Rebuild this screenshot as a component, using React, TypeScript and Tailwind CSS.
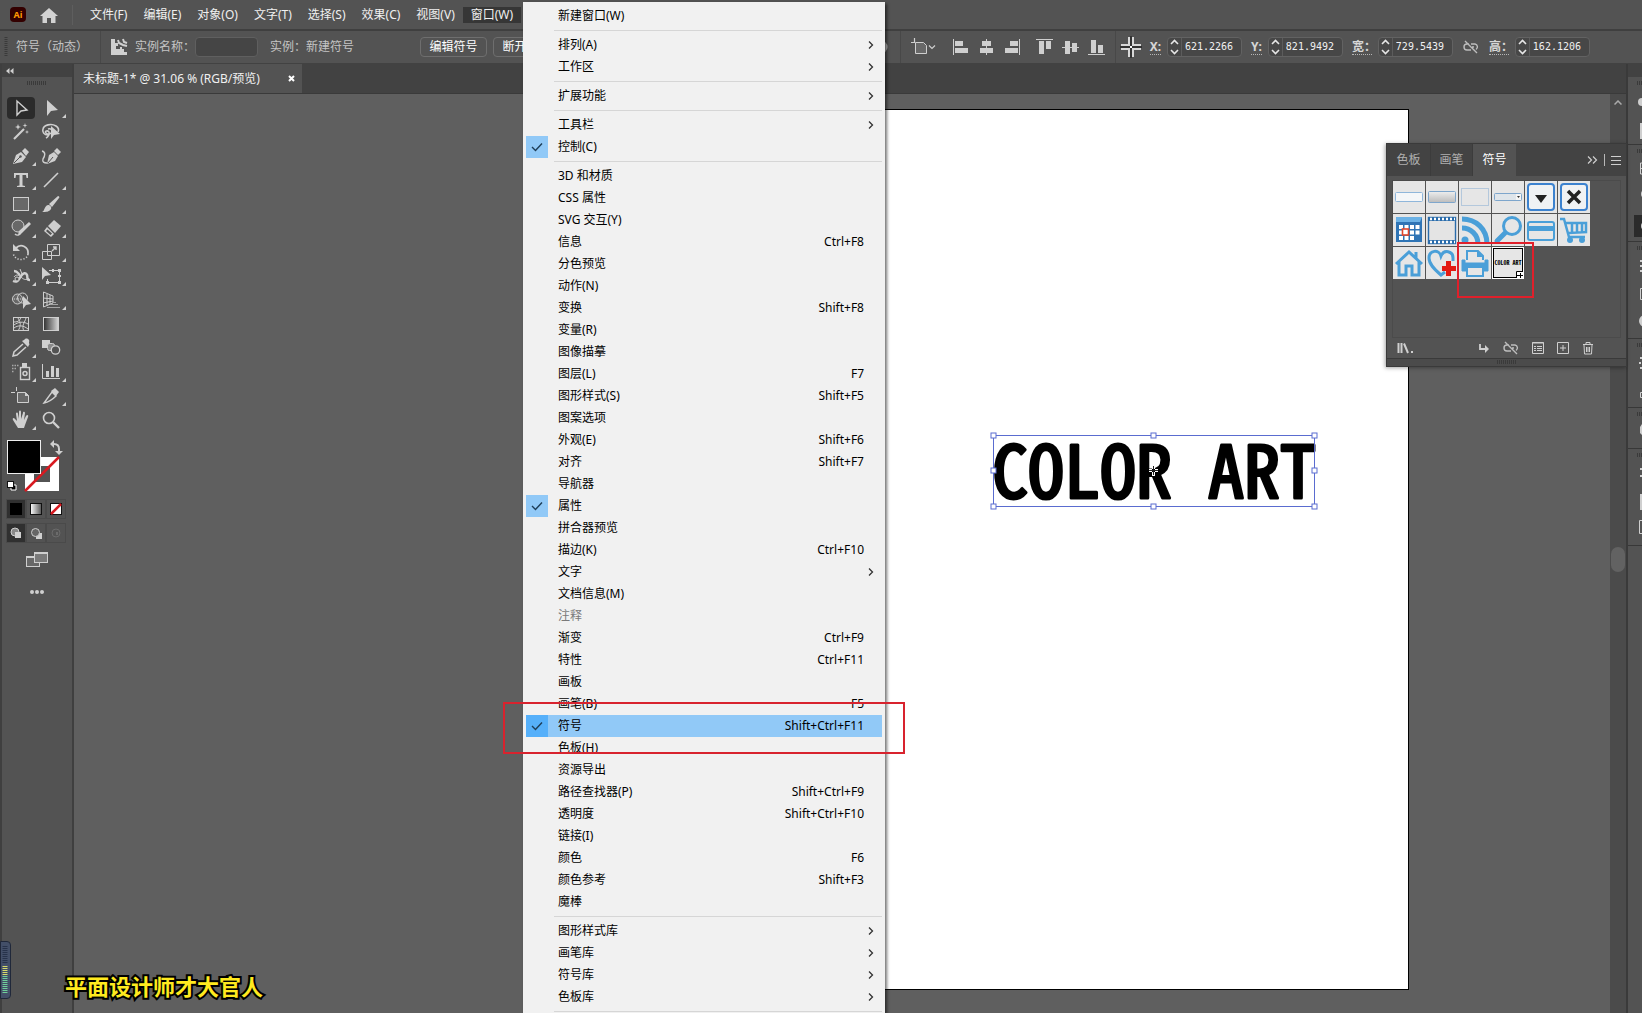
import type { ReactNode } from "react";
import { clsx } from "clsx";

type MenuEntry = {
  label: string;
  shortcut?: string;
  submenu?: boolean;
  checked?: boolean;
  active?: boolean;
  disabled?: boolean;
};

const menuBar = [
  "文件(F)",
  "编辑(E)",
  "对象(O)",
  "文字(T)",
  "选择(S)",
  "效果(C)",
  "视图(V)",
  "窗口(W)",
];

const windowMenu: MenuEntry[][] = [
  [{ label: "新建窗口(W)" }],
  [
    { label: "排列(A)", submenu: true },
    { label: "工作区", submenu: true },
  ],
  [{ label: "扩展功能", submenu: true }],
  [
    { label: "工具栏", submenu: true },
    { label: "控制(C)", checked: true },
  ],
  [
    { label: "3D 和材质" },
    { label: "CSS 属性" },
    { label: "SVG 交互(Y)" },
    { label: "信息", shortcut: "Ctrl+F8" },
    { label: "分色预览" },
    { label: "动作(N)" },
    { label: "变换", shortcut: "Shift+F8" },
    { label: "变量(R)" },
    { label: "图像描摹" },
    { label: "图层(L)", shortcut: "F7" },
    { label: "图形样式(S)", shortcut: "Shift+F5" },
    { label: "图案选项" },
    { label: "外观(E)", shortcut: "Shift+F6" },
    { label: "对齐", shortcut: "Shift+F7" },
    { label: "导航器" },
    { label: "属性", checked: true },
    { label: "拼合器预览" },
    { label: "描边(K)", shortcut: "Ctrl+F10" },
    { label: "文字", submenu: true },
    { label: "文档信息(M)" },
    { label: "注释", disabled: true },
    { label: "渐变", shortcut: "Ctrl+F9" },
    { label: "特性", shortcut: "Ctrl+F11" },
    { label: "画板" },
    { label: "画笔(B)", shortcut: "F5" },
    { label: "符号", shortcut: "Shift+Ctrl+F11", checked: true, active: true },
    { label: "色板(H)" },
    { label: "资源导出" },
    { label: "路径查找器(P)", shortcut: "Shift+Ctrl+F9" },
    { label: "透明度", shortcut: "Shift+Ctrl+F10" },
    { label: "链接(I)" },
    { label: "颜色", shortcut: "F6" },
    { label: "颜色参考", shortcut: "Shift+F3" },
    { label: "魔棒" },
  ],
  [
    { label: "图形样式库", submenu: true },
    { label: "画笔库", submenu: true },
    { label: "符号库", submenu: true },
    { label: "色板库", submenu: true },
  ],
  [],
];

function Svg({
  w = 20,
  h = 20,
  children,
}: {
  w?: number;
  h?: number;
  children: ReactNode;
}) {
  return (
    <svg
      width={w}
      height={h}
      viewBox={`0 0 ${w} ${h}`}
      fill="none"
      stroke="none"
      aria-hidden="true"
      className="block shrink-0"
    >
      {children}
    </svg>
  );
}

const C = "#cfcfcf";

// Toolbar tools, two per row. `more` draws the flyout corner.
const tools: { name: string; more?: boolean; icon: ReactNode }[] = [
  {
    name: "选择工具",
    icon: <path d="M6 3v14l4-4 6-1z" stroke={C} strokeWidth="1.4" />,
  },
  {
    name: "直接选择工具",
    more: true,
    icon: <path d="M6 2v16l4-5 7-1z" fill={C} />,
  },
  {
    name: "魔棒工具",
    icon: (
      <>
        <path d="M3 17 13 7" stroke={C} strokeWidth="2.2" />
        <path
          d="m7 2 .8 2.2L10 5l-2.200.8L7 8l-.8-2.200L4 5l2.200-.8zM14 1l.6 1.900 1.900.6-1.900.6L14 6l-.6-1.900-1.900-.6 1.900-.6zM16 8l.5 1.500L18 10l-1.500.5L16 12l-.5-1.500L14 10l1.500-.5z"
          fill={C}
        />
      </>
    ),
  },
  {
    name: "套索工具",
    icon: (
      <>
        <path
          d="M7 13c-4 0-6-3-5-6 1-4 8-6 13-3 3 2 3 4 2 6M7 7c3-1 5 1 4 3s-4 3-6 1 2-3 3-1-1 5-3 6"
          stroke={C}
          strokeWidth="1.6"
        />
        <path d="M10 4v13l3-4 6-1z" fill={C} />
      </>
    ),
  },
  {
    name: "钢笔工具",
    more: true,
    icon: (
      <>
        <path d="m2 18 3-9 5-3 5 5-4 5z" fill={C} />
        <path d="m11 5 3-3 4 4-3 4z" fill={C} />
        <path d="m3 17 6-6" stroke="#535353" />
        <circle cx="9.500" cy="10.500" r="1.200" fill="#535353" />
      </>
    ),
  },
  {
    name: "曲率工具",
    icon: (
      <>
        <path d="m6 18 2-9 5-3 4 4-3 5z" fill={C} />
        <path d="m13 5 3-3 4 4-3 3z" fill={C} />
        <path d="m7 17 5-6" stroke="#535353" />
        <path d="M1 5c4 1 3 5 1 8-1 3 1 4 4 4" stroke={C} strokeWidth="1.400" />
      </>
    ),
  },
  {
    name: "文字工具",
    more: true,
    icon: (
      <path
        d="M3 3h14v5h-1.500L15 5h-3.500v10.500L14 16v1H6v-1l2.500-.5V5H5l-.5 3H3z"
        fill={C}
      />
    ),
  },
  {
    name: "直线段工具",
    more: true,
    icon: <path d="M3 17 17 3" stroke={C} strokeWidth="1.600" />,
  },
  {
    name: "矩形工具",
    more: true,
    icon: (
      <rect x="2.500" y="3.500" width="15" height="13" fill="#686868" stroke={C} />
    ),
  },
  {
    name: "画笔工具",
    more: true,
    icon: (
      <>
        <path d="m8 10 9-8c1 0 2 1 1 2l-7 9z" fill={C} />
        <path d="M7 11c2 0 4 2 3 4-2 3-5 3-9 3 3-1 2-6 6-7z" fill={C} />
      </>
    ),
  },
  {
    name: "Shaper 工具",
    more: true,
    icon: (
      <>
        <circle cx="7" cy="8" r="6" fill="#686868" stroke={C} />
        <path d="m8 13 10-9 2 2-9 9-4 2z" fill={C} />
        <path d="M4 16c2 2 5 1 6-1" stroke={C} strokeWidth="1.400" />
      </>
    ),
  },
  {
    name: "橡皮擦工具",
    more: true,
    icon: (
      <>
        <path d="m7 8 6-6 7 6-6 7z" fill={C} />
        <path d="m6 9 7 7-3 3-7-6z" fill={C} />
        <path d="m6.500 11.500 4.500 4-1.500 1.500-4.500-4z" fill="#535353" />
      </>
    ),
  },
  {
    name: "旋转工具",
    more: true,
    icon: (
      <>
        <path d="M5 6c5-5 13-1 12 6" stroke={C} strokeWidth="1.800" />
        <path
          d="M17 12c-1 7-13 8-15-1"
          stroke={C}
          strokeWidth="1.600"
          strokeDasharray="1.200 1.800"
        />
        <path d="M2 2v7h7z" fill={C} />
      </>
    ),
  },
  {
    name: "比例缩放工具",
    more: true,
    icon: (
      <>
        <path d="M6.500 2.500h12v11h-12zM1.500 9.500h9v8h-9z" stroke={C} />
        <path d="m11 9 4-4M12 5h3v3" stroke={C} strokeWidth="1.400" />
      </>
    ),
  },
  {
    name: "宽度工具",
    more: true,
    icon: (
      <>
        <path
          d="M2 15c5 2 6-2 8-5s5-4 6-1-1 5 3 5M3 5c4 0 4 3 6 4"
          stroke={C}
          strokeWidth="2.400"
        />
        <path d="M3 11c2-3 5-2 7 0s5 4 8 1M9 3l2 5" stroke={C} />
        <circle cx="6" cy="13" r="2" fill="#535353" stroke={C} />
      </>
    ),
  },
  {
    name: "自由变换工具",
    more: true,
    icon: (
      <>
        <path d="M1 1v13l3-4 6-1z" fill={C} />
        <path d="M8 4.500h10.500v12h-12V13" stroke={C} />
        <path d="M17 3h3v3h-3zM5 15h3v3H5zM17 15h3v3h-3zM11 3h2v3h-2zM17 9h3v2h-3z" fill={C} />
      </>
    ),
  },
  {
    name: "形状生成器工具",
    more: true,
    icon: (
      <>
        <circle cx="6.500" cy="9" r="5" fill="#686868" stroke={C} />
        <circle cx="11.500" cy="8" r="5" stroke={C} />
        <path d="M3 9h10" stroke={C} strokeDasharray="1 1" />
        <path d="M12 6v13l3-4 5-1z" fill={C} />
      </>
    ),
  },
  {
    name: "透视网格工具",
    more: true,
    icon: (
      <>
        <path
          d="M2.500 2v15L12 13V6zM2 8l10 1M2 13l10-2M6 4v12M9 5v9"
          stroke={C}
        />
        <path d="M12 12.500h3M9 14.500h8M6 17.500h13" stroke="#a5a5a5" />
      </>
    ),
  },
  {
    name: "网格工具",
    icon: (
      <>
        <rect x="2.500" y="3.500" width="15" height="13" stroke={C} />
        <path
          d="M3 8c5 0 6-2 7-5M7 17c3-5 3-8 0-13M13 17c-3-5 1-9 2-13M3 14c4-3 9-3 14 1M3 11c4-3 9-4 14-1"
          stroke={C}
        />
      </>
    ),
  },
  {
    name: "渐变工具",
    icon: (
      <>
        <defs>
          <linearGradient id="tool-gradient">
            <stop stopColor="#303030" />
            <stop offset="1" stopColor="#d8d8d8" />
          </linearGradient>
        </defs>
        <rect
          x="2.500"
          y="3.500"
          width="15"
          height="13"
          fill="url(#tool-gradient)"
          stroke={C}
        />
      </>
    ),
  },
  {
    name: "吸管工具",
    more: true,
    icon: (
      <>
        <path d="m11 3 6 6 1-2c1-1 0-1 0-2s1-3-1-4-3 0-4 1z" fill={C} />
        <path d="m12 6-9 8-1 4 4-1 9-8" stroke={C} strokeWidth="1.500" />
      </>
    ),
  },
  {
    name: "混合工具",
    icon: (
      <>
        <path d="M1 2h8v8H1z" fill={C} />
        <rect x="6.500" y="5.500" width="7" height="7" rx="2" fill="#8a8a8a" stroke={C} />
        <circle cx="14.500" cy="12" r="4.200" fill="#535353" stroke={C} strokeWidth="1.300" />
      </>
    ),
  },
  {
    name: "符号喷枪工具",
    more: true,
    icon: (
      <>
        <path d="M11 1h5v4h-5z" fill={C} />
        <rect x="9.500" y="5.500" width="9" height="12" stroke={C} strokeWidth="1.400" />
        <circle cx="14" cy="11.500" r="2" stroke={C} strokeWidth="1.500" />
        <path d="M1 3.500h7M1 6.500h5M1 9.500h2" stroke="#a8a8a8" strokeWidth="1.500" strokeDasharray="1.500 1" />
      </>
    ),
  },
  {
    name: "柱形图工具",
    more: true,
    icon: (
      <>
        <path d="M1.500 2v14.500H19" stroke={C} />
        <path d="M5 9h3v6H5zM10 4h3v11h-3zM15 6h3v9h-3z" fill={C} />
      </>
    ),
  },
  {
    name: "画板工具",
    icon: (
      <>
        <path d="M6.500 6.500h8l3 3v7h-11z" fill="#686868" stroke={C} />
        <path d="M0 6.500h4M5.500 1v4" stroke={C} />
        <path d="M14 6v4h4z" fill={C} />
      </>
    ),
  },
  {
    name: "切片工具",
    more: true,
    icon: (
      <>
        <path d="M3 17 11 6l4 4c-3 3-7 6-12 7z" stroke={C} strokeWidth="1.400" />
        <path d="m10 5 4-3 4 4-3 4z" fill={C} />
      </>
    ),
  },
  {
    name: "抓手工具",
    more: true,
    icon: (
      <path
        d="M7 18 2 10c-1-2 1-3 2-1l2 2L5 4c0-2 2-2 2 0l1 5V2c0-2 2-2 2 0v7l2-6c0-2 2-1 2 0l-1 7 2-4c1-2 3-1 2 1l-3 8-1 3z"
        fill={C}
      />
    ),
  },
  {
    name: "缩放工具",
    icon: (
      <>
        <circle cx="8" cy="8" r="5.500" stroke={C} strokeWidth="1.600" />
        <path d="m12 12 6 6" stroke={C} strokeWidth="2.400" />
      </>
    ),
  },
];

function Toolbar() {
  return (
    <aside className="flex w-[74px] shrink-0 flex-col border-x-2 border-[#3f3f3f] bg-[#535353]">
      <div className="flex h-[13px] items-center bg-[#424242] pl-1">
        <Svg w={8} h={6}>
          <path d="M3.500 0v6L0 3zM7.500 0v6L4 3z" fill={C} />
        </Svg>
      </div>
      <div className="flex h-[19px] justify-center pt-1">
        <Grip />
      </div>
      <div className="grid grid-cols-[30px_30px] pl-1">
        {tools.map((tool, i) => (
          <button
            key={tool.name}
            type="button"
            aria-label={tool.name}
            className="relative flex h-6 items-center justify-center"
          >
            <span
              className={clsx(
                "flex h-[22px] w-7 items-center justify-center rounded-sm",
                i === 0 && "bg-[#2b2b2b]",
              )}
            >
              <Svg>{tool.icon}</Svg>
            </span>
            {tool.more && (
              <span className="absolute right-0 bottom-[2px]">
                <Svg w={4} h={4}>
                  <path d="M4 0v4H0z" fill={C} />
                </Svg>
              </span>
            )}
          </button>
        ))}
      </div>
      <div className="pt-[6px] pl-1">
        <svg width="60" height="60" viewBox="0 0 60 60" className="block">
          <path
            d="M19 19h34v34H19zM28 28v16h16V28z"
            fill="#fff"
            fillRule="evenodd"
          />
          <path d="M19 53 53 19" stroke="#d81920" strokeWidth="2.500" />
          <rect x="1.500" y="2.500" width="33" height="33" fill="#000" stroke="#eee" />
          <path d="M45 6h3q5 0 5 5v3" fill="none" stroke={C} strokeWidth="2" />
          <path d="m44 6 4-4v8zM49 13h8l-4 4z" fill={C} />
          <path d="M5 47h5v5H5z" fill="#000" stroke="#fff" />
          <rect x="1.500" y="43.500" width="6" height="6" fill="#fff" stroke="#111" />
        </svg>
        <div className="mt-px flex">
          <SwatchButton label="颜色" on>
            <path d="M1 1h12v12H1z" fill="#000" />
          </SwatchButton>
          <SwatchButton label="渐变">
            <defs>
              <linearGradient id="swatch-gradient">
                <stop stopColor="#fff" />
                <stop offset="1" stopColor="#555" />
              </linearGradient>
            </defs>
            <rect x="1.500" y="1.500" width="11" height="11" fill="url(#swatch-gradient)" stroke="#111" />
          </SwatchButton>
          <SwatchButton label="无">
            <rect x="1.500" y="1.500" width="11" height="11" fill="#fff" stroke="#111" />
            <path d="M2 12 12 2" stroke="#d81920" strokeWidth="2.500" />
          </SwatchButton>
        </div>
        <div className="mt-1 flex">
          <SwatchButton label="正常绘图" on>
            <circle cx="6" cy="6" r="4" fill="#888" stroke={C} />
            <path d="M6 6h6v6H6z" fill={C} />
          </SwatchButton>
          <SwatchButton label="背面绘图">
            <path d="M7 7h6v6H7z" fill={C} />
            <circle cx="6.500" cy="6.500" r="4" fill="#666" stroke={C} />
          </SwatchButton>
          <SwatchButton label="内部绘图">
            <circle cx="7" cy="7" r="4" stroke="#6b6b6b" />
            <path d="M7 6h2v3H7z" fill="#6b6b6b" />
          </SwatchButton>
        </div>
      </div>
      <button type="button" aria-label="更改屏幕模式" className="mt-2 self-center">
        <Svg w={22} h={18}>
          <rect x=".5" y="5.500" width="13" height="10" fill="#686868" stroke={C} />
          <path d="M0 5h8v2H0z" fill={C} />
          <rect x="8.500" y="1.500" width="13" height="10" fill="#7a7a7a" stroke={C} />
          <path d="M8 1h14v2H8z" fill={C} />
        </Svg>
      </button>
      <button type="button" aria-label="编辑工具栏" className="mt-5 self-center">
        <Svg w={14} h={6}>
          <path
            d="M2 3h.01M7 3h.01M12 3h.01"
            stroke={C}
            strokeWidth="4"
            strokeLinecap="round"
          />
        </Svg>
      </button>
    </aside>
  );
}

function SwatchButton({
  label,
  on,
  children,
}: {
  label: string;
  on?: boolean;
  children: ReactNode;
}) {
  return (
    <button
      type="button"
      aria-label={label}
      className={clsx(
        "flex h-5 w-5 items-center justify-center border border-[#4a4a4a]",
        on && "bg-[#303030]",
      )}
    >
      <Svg w={14} h={14}>
        {children}
      </Svg>
    </button>
  );
}

function Grip() {
  return (
    <Svg w={20} h={5}>
      <path d="M0 2h20" stroke="#3a3a3a" strokeWidth="4" strokeDasharray="1 1" />
    </Svg>
  );
}

function NumberField({
  id,
  label,
  value,
  wide,
}: {
  id: string;
  label: string;
  value: string;
  wide?: boolean;
}) {
  return (
    <div className="flex items-center gap-[6px]">
      <label
        htmlFor={id}
        className={clsx(
          "border-b border-dotted border-[#b5b5b5] text-xs leading-[14px] font-bold whitespace-nowrap text-[#d6d6d6]",
          wide && "w-5",
        )}
      >
        {label}
      </label>
      <div className="flex h-5 w-[75px] items-center rounded-sm border border-[#626262] bg-[#474747]">
        <button
          type="button"
          aria-label="调整数值"
          className="flex h-full w-[17px] items-center justify-center border-r border-[#5c5c5c]"
        >
          <Svg w={9} h={16}>
            <path d="m1 5 3.500-3.500L8 5M1 11l3.500 3.500L8 11" stroke="#e6e6e6" strokeWidth="1.600" />
          </Svg>
        </button>
        <input
          id={id}
          defaultValue={value}
          className="w-full min-w-0 bg-transparent pl-[3px] font-['DejaVu_Sans_Mono','Liberation_Mono',monospace] text-[10px] text-[#f0f0f0] outline-none"
        />
      </div>
    </div>
  );
}

function Divider() {
  return <div className="h-8 w-px bg-[#484848]" />;
}

function ControlBar() {
  return (
    <div className="flex h-[35px] items-center border-t-2 border-b border-t-[#3f3f3f] border-b-[#424242] bg-[#535353] pl-1 text-xs whitespace-nowrap text-[#c4c4c4]">
      <Svg w={4} h={20}>
        <path d="M2 0v20" stroke="#3a3a3a" strokeWidth="3" strokeDasharray="1 1" />
      </Svg>
      <span className="w-[92px] pl-2">符号（动态）</span>
      <Divider />
      <div className="flex items-center pl-[9px]">
        <Svg w={18} h={18}>
          <path d="M1 1h4v4h3v3H6v3h4V9h2v2h2v3h3v3H1z" fill={C} />
          <path
            d="M8 2l1 3 4 2 4 1M13 1l1 3 3 1"
            stroke={C}
            strokeWidth="2"
          />
        </Svg>
        <label htmlFor="instance-name" className="ml-[7px] w-[60px]">
          实例名称：
        </label>
        <input
          id="instance-name"
          className="h-5 w-[63px] rounded-sm border border-[#5f5f5f] bg-[#454545] px-1 outline-none"
        />
        <span className="ml-3 w-[150px]">实例：新建符号</span>
        <div className="flex gap-[6px] text-white">
          <button type="button" className="h-5 w-[67px] rounded-sm border border-[#6e6e6e] leading-none">
            编辑符号
          </button>
          <button type="button" className="h-5 w-[67px] rounded-sm border border-[#6e6e6e] leading-none">
            断开链接
          </button>
        </div>
      </div>
      <div className="ml-auto flex items-center pr-[52px]">
        <Svg w={14} h={14}>
          <circle cx="7" cy="7" r="6.500" fill="#bbb" />
        </Svg>
        <div className="mr-[10px] ml-3">
          <Divider />
        </div>
        <button type="button" aria-label="对齐选项">
          <Svg w={26} h={18}>
            <path d="M4.500 4.500h8l3 3v8h-11z" fill="#686868" stroke={C} />
            <path d="M0 4.500h4M3.500 0v4M18 7.500l3 3 3-3" stroke={C} strokeWidth="1.200" />
          </Svg>
        </button>
        <div className="ml-[15px] flex items-center gap-[9px]">
          {alignIcons.map((a) => (
            <button key={a.name} type="button" aria-label={a.name} className="nth-[4]:ml-[6px]">
              <Svg w={17} h={18}>
                <path d={a.d} fill={C} />
              </Svg>
            </button>
          ))}
        </div>
        <div className="mr-1 ml-[10px]">
          <Divider />
        </div>
        <Svg w={22} h={22}>
          <path d="M11 1v20M1 11h20" stroke="#d8d8d8" strokeWidth="6" />
          <path d="M11 0v22M0 11h22" stroke="#333" strokeWidth="2" />
          <path d="M10 10h2v2h-2z" fill="#fff" />
        </Svg>
        <div className="ml-2 flex items-center gap-[9px]">
          <NumberField id="pos-x" label="X:" value="621.2266" />
          <NumberField id="pos-y" label="Y:" value="821.9492" />
          <NumberField id="size-w" label="宽：" value="729.5439" wide />
          <div className="px-px">
            <UnlinkIcon />
          </div>
          <NumberField id="size-h" label="高：" value="162.1206" wide />
        </div>
      </div>
    </div>
  );
}

const alignIcons = [
  { name: "水平左对齐", d: "M1 1h1v16H1zM3 3h8v5H3zM3 10h13v5H3z" },
  { name: "水平居中对齐", d: "M8 1h1v16H8zM4 3h9v5H4zM2 10h13v5H2z" },
  { name: "水平右对齐", d: "M15 1h1v16h-1zM6 3h8v5H6zM1 10h13v5H1z" },
  { name: "垂直顶对齐", d: "M0 1h17v1H0zM3 3h5v13H3zM10 3h5v8h-5z" },
  { name: "垂直居中对齐", d: "M0 9h17v1H0zM3 3h5v13H3zM10 5h5v9h-5z" },
  { name: "垂直底对齐", d: "M0 16h17v1H0zM3 2h5v13H3zM10 7h5v8h-5z" },
];

function UnlinkIcon() {
  return (
    <Svg w={16} h={14}>
      <path
        d="M6 4H4a3 3 0 0 0 0 6h4M8 4h4a3 3 0 0 1 1 5.500M9 7h2M2 1l12 12"
        stroke="#bdbdbd"
        strokeWidth="1.400"
      />
    </Svg>
  );
}

function WindowMenu() {
  return (
    <div
      role="menu"
      className="absolute top-[2px] bottom-0 left-[523px] w-[362px] overflow-hidden bg-[#f1f1f1] py-[3px] shadow-[2px_2px_3px_rgba(0,0,0,0.55)]"
    >
      {windowMenu.map((group, g) => (
        <div key={g}>
          {g > 0 && (
            <div className="mr-[3px] ml-[31px] flex h-[7px] items-center">
              <div className="h-px w-full bg-[#d6d6d6]" />
            </div>
          )}
          {group.map((item) => (
            <button
              key={item.label}
              type="button"
              role="menuitem"
              disabled={item.disabled}
              className={clsx(
                "mx-[3px] flex h-[22px] w-[356px] items-center text-left text-xs",
                item.active && "bg-[#91c9f7]",
                item.disabled ? "text-[#7a7a7a]" : "text-black",
              )}
            >
              <span
                className={clsx(
                  "flex h-[22px] w-[22px] items-center justify-center",
                  item.checked && (item.active ? "bg-[#56b0fa]" : "bg-[#91c9f7]"),
                )}
              >
                {item.checked && (
                  <Svg w={12} h={10}>
                    <path d="m1 5 3.500 3.500L11 1.500" stroke="#1d3d57" strokeWidth="1.400" />
                  </Svg>
                )}
              </span>
              <span className="ml-[10px] flex-1">{item.label}</span>
              {item.shortcut && <span className="mr-[18px]">{item.shortcut}</span>}
              {item.submenu && (
                <span className="mr-2">
                  <Svg w={6} h={10}>
                    <path d="m1 1.500 3.500 3.500L1 8.500" stroke="#333" strokeWidth="1.300" />
                  </Svg>
                </span>
              )}
            </button>
          ))}
        </div>
      ))}
    </div>
  );
}

const B = "#4a9fd8";

const symbols: { name: string; icon: ReactNode }[] = [
  {
    name: "按钮",
    icon: <rect x="2.500" y="11.500" width="27" height="9" rx="1" fill="#f4f6f8" stroke="#8fb6da" />,
  },
  {
    name: "渐变按钮",
    icon: (
      <>
        <defs>
          <linearGradient id="sym-button" x2="0" y2="1">
            <stop stopColor="#eee" />
            <stop offset="1" stopColor="#bbb" />
          </linearGradient>
        </defs>
        <rect x="2.500" y="10.500" width="27" height="11" rx="1" fill="url(#sym-button)" stroke="#7ea6cc" />
      </>
    ),
  },
  {
    name: "文本框",
    icon: <rect x="2.500" y="7.500" width="27" height="17" stroke="#b4c8dc" />,
  },
  {
    name: "下拉框",
    icon: (
      <>
        <rect x="2.500" y="12.500" width="27" height="7" rx="1" fill="#dfe5ea" stroke="#7ea6cc" />
        <path d="M24 13h5v6h-5z" fill="#f5f5f5" />
        <path d="M25 15h3l-1.500 2z" fill="#333" />
      </>
    ),
  },
  {
    name: "箭头按钮",
    icon: (
      <>
        <rect x="3" y="3" width="26" height="26" rx="3" fill="#f0f2f4" stroke="#3c82cf" strokeWidth="2" />
        <path d="M10 14h12l-6 8z" fill="#222" />
      </>
    ),
  },
  {
    name: "关闭按钮",
    icon: (
      <>
        <rect x="3" y="3" width="26" height="26" rx="3" fill="#f0f2f4" stroke="#3c82cf" strokeWidth="2" />
        <path d="m10 10 12 12M22 10 10 22" stroke="#222" strokeWidth="3.500" />
      </>
    ),
  },
  {
    name: "日历",
    icon: (
      <>
        <rect x="3" y="3" width="26" height="25" fill="#2f74b5" />
        <path d="M3 3h26l-2 5H3z" fill="#6cb2e6" />
        <path
          d="M6 11h4v4H6zM11.500 11h4v4h-4zM17 11h4v4h-4zM22.500 11h4v4h-4zM6 16.500h4v4H6zM17 16.500h4v4h-4zM22.500 16.500h4v4h-4zM6 22h4v4H6zM11.500 22h4v4h-4zM17 22h4v4h-4z"
          fill="#fff"
        />
        <rect x="9.500" y="15" width="6" height="6" fill="#fff" stroke="#e2472c" strokeWidth="1.600" />
      </>
    ),
  },
  {
    name: "胶片",
    icon: (
      <>
        <rect x="2.500" y="3.500" width="27" height="26" fill="#e4e4e4" stroke="#2a6cab" strokeWidth="1.400" />
        <path d="M3 5h26M3 28h26" stroke="#2a6cab" strokeWidth="4" />
        <path d="M4 5h25M4 28h25" stroke="#fff" strokeWidth="2.500" strokeDasharray="2 2" />
      </>
    ),
  },
  {
    name: "RSS",
    icon: (
      <>
        <path d="M3 5c14 0 25 10 25 25M3 14c9 0 16 7 16 16" stroke={B} strokeWidth="5" />
        <circle cx="6" cy="26" r="3.500" fill={B} />
      </>
    ),
  },
  {
    name: "搜索",
    icon: (
      <>
        <circle cx="20" cy="12" r="8.500" stroke={B} strokeWidth="3" />
        <path d="m13 19-8 8" stroke={B} strokeWidth="5" strokeLinecap="round" />
      </>
    ),
  },
  {
    name: "信用卡",
    icon: (
      <>
        <rect x="3" y="8" width="26" height="18" rx="2" stroke={B} strokeWidth="2" />
        <path d="M2 14.500h28" stroke={B} strokeWidth="5" />
      </>
    ),
  },
  {
    name: "购物车",
    icon: (
      <>
        <path d="M2 5h4l5 18h16M8 9h20v9l-18 1M14 9v9M19 9v9M24 9v9" stroke={B} strokeWidth="2.500" />
        <circle cx="12" cy="26" r="3" fill={B} />
        <circle cx="24" cy="26" r="3" fill={B} />
      </>
    ),
  },
  {
    name: "主页",
    icon: (
      <path
        d="M3 17 16 5l13 12M6 15v13h7v-9h6v9h7V15M23 5v6"
        stroke={B}
        strokeWidth="3"
      />
    ),
  },
  {
    name: "收藏",
    icon: (
      <>
        <path
          d="M19 25l-4 3C8 22 3 17 3 11c0-8 10-9 12-2 3-7 12-5 12 2v3"
          stroke={B}
          strokeWidth="3"
        />
        <path d="M20 14h5v5h5v5h-5v5h-5v-5h-4v-5h4z" fill="#e31a12" />
      </>
    ),
  },
  {
    name: "打印",
    icon: (
      <>
        <path d="M8 13V4h11l5 5v4" stroke={B} strokeWidth="2" />
        <path d="M18 3v7h6z" fill={B} />
        <path d="M3 13h3v3h20v-3h3v11h-4v-5H7v5H3z" fill={B} stroke={B} strokeLinejoin="round" />
        <path d="M8 20h16v9H8z" stroke={B} strokeWidth="2" fill="#e6e6e6" />
      </>
    ),
  },
];

function SymbolsPanel() {
  return (
    <section className="absolute top-[143px] right-[15px] flex h-[224px] w-[241px] flex-col border border-[#3a3a3a] bg-[#535353] shadow-[-1px_1px_4px_rgba(0,0,0,0.35)]">
      <div className="flex h-8 items-stretch bg-[#434343] text-xs text-[#b0b0b0]">
        <button type="button" className="w-[43px]">
          色板
        </button>
        <button type="button" className="w-[43px] border-x border-[#3c3c3c]">
          画笔
        </button>
        <button type="button" className="w-[43px] bg-[#535353] text-white">
          符号
        </button>
        <div className="ml-auto flex items-center gap-[6px] pr-[5px]">
          <Svg w={11} h={8}>
            <path d="m1 .5 3.500 3.500L1 7.500M6 .5 9.500 4 6 7.500" stroke={C} strokeWidth="1.200" />
          </Svg>
          <div className="h-3 w-px bg-[#b8b8b8]" />
          <Svg w={10} h={9}>
            <path d="M0 .5h10M0 4.500h10M0 8.500h10" stroke={C} />
          </Svg>
        </div>
      </div>
      <div className="mx-[5px] mt-1 flex-1 border border-[#4b4b4b]">
        <div className="grid w-[197px] grid-cols-6 gap-px">
          {symbols.map((s) => (
            <button key={s.name} type="button" aria-label={s.name} className="bg-[#e6e6e6]">
              <Svg w={32} h={32}>
                {s.icon}
              </Svg>
            </button>
          ))}
          <button type="button" aria-label="新建符号" className="bg-white">
            <Svg w={32} h={32}>
              <rect x="1.500" y="1.500" width="29" height="29" fill="#e6e6e6" stroke="#000" />
              <text
                x="16"
                y="18"
                textAnchor="middle"
                fill="#000"
                fontSize="6"
                fontWeight="700"
                fontFamily="'Noto Sans Mono CJK SC', 'Liberation Mono', monospace"
              >
                COLOR ART
              </text>
              <path d="M32 24h-8v8h8z" fill="#fff" />
              <path d="M31 24.500h-6.500V31M25 28.500h6M28.500 26v5" stroke="#000" />
            </Svg>
          </button>
        </div>
      </div>
      <div className="flex h-5 items-center pr-[32px] pl-[10px]">
        <button type="button" aria-label="符号库菜单" className="mr-auto">
          <Svg w={17} h={12}>
            <path d="M1.500 1v10M4.500 1v10M7 1.500 11 11" stroke={C} strokeWidth="2" />
            <path d="M14 9h2v2h-2z" fill={C} />
          </Svg>
        </button>
        <div className="flex items-center gap-[13px]">
          <Svg w={12} h={12}>
            <path d="M2 2v5h7" stroke={C} strokeWidth="1.800" />
            <path d="M7 3v8l4-4z" fill={C} />
          </Svg>
          <UnlinkIcon />
          <Svg w={12} h={12}>
            <path d="M.5.5h11v11H.5z" stroke={C} />
            <path d="M0 1h12M2 4.500h2M5 4.500h5M2 6.500h2M5 6.500h5M2 8.500h2M5 8.500h5" stroke={C} />
          </Svg>
          <Svg w={12} h={12}>
            <path d="M.5.5h11v11H.5zM6 3v6M3 6h6" stroke={C} />
          </Svg>
          <Svg w={12} h={13}>
            <path d="M1 2.500h10M4 2V.5h4V2M2 3l.5 9h7l.5-9M4.500 5v5M6 5v5M7.500 5v5" stroke={C} />
          </Svg>
        </div>
      </div>
      <div className="flex h-2 items-center justify-center border-t border-[#3a3a3a] bg-[#4b4b4b]">
        <Grip />
      </div>
    </section>
  );
}

// Collapsed dock on the right edge, only its left sliver shows.
const dockGroups: { box: string; icons: ReactNode }[] = [
  {
    box: "h-[68px]",
    icons: (
      <>
        <circle cx="14" cy="25" r="4" fill={C} />
        <path d="M13 46v16" stroke={C} strokeWidth="2" />
      </>
    ),
  },
  {
    box: "h-[97px]",
    icons: (
      <>
        <path d="M17 18h-4.500v11H17M12 23.500h5" stroke={C} />
        <circle cx="17" cy="49" r="4" fill={C} />
        <path d="M6 70h12v22H6z" fill="#2b2b2b" />
        <circle cx="17" cy="81" r="4" fill={C} />
      </>
    ),
  },
  {
    box: "h-[97px]",
    icons: (
      <>
        <path d="M12 19h6M12 24h6M12 29h6" stroke={C} strokeWidth="2" />
        <path d="M18 46.500h-5.500v11H18" stroke={C} />
        <circle cx="17" cy="79" r="6" fill={C} />
      </>
    ),
  },
  {
    box: "h-[69px]",
    icons: (
      <>
        <path d="M13 18v2M12 23v2M13 28v2" stroke={C} strokeWidth="2" />
        <path d="M18 53.500h-5.500v5H18" stroke={C} />
      </>
    ),
  },
  { box: "h-[41px]", icons: <path d="M18 16h-4l-2 3v6l2 2h4z" fill={C} /> },
  {
    box: "h-[97px]",
    icons: (
      <>
        <path d="M12 20h3M12 27h3" stroke={C} strokeWidth="2" />
        <path d="M12 45h6v16h-6z" fill={C} />
        <path d="M18 71.500h-6.500v13H18" stroke={C} />
      </>
    ),
  },
];

function Dock() {
  return (
    <aside className="w-4 shrink-0 overflow-hidden border-l-2 border-[#3a3a3a] bg-[#535353]">
      <div className="h-[13px] bg-[#424242]" />
      {dockGroups.map((g, i) => (
        <div key={i} className={clsx("overflow-hidden border-b border-[#383838]", g.box)}>
          <Svg w={18} h={97}>
            <path d="M9 6h9" stroke="#3a3a3a" strokeWidth="4" strokeDasharray="1 1" />
            {g.icons}
          </Svg>
        </div>
      ))}
    </aside>
  );
}

const handles = [
  [0, 0],
  [160, 0],
  [321, 0],
  [0, 35],
  [321, 35],
  [0, 71],
  [160, 71],
  [321, 71],
];

function Canvas() {
  return (
    <div className="relative flex-1 overflow-hidden bg-[#5f5f5f]">
      <div className="absolute top-[15px] left-[712px] h-[881px] w-[623px] border border-black bg-white" />
      <div className="absolute top-[335px] left-[913px]">
        <svg width="334" height="84" viewBox="-6 -6 334 84" className="block overflow-visible">
          <text
            x="-1"
            y="63"
            fontSize="72"
            fontWeight="400"
            fontFamily="'Noto Sans Mono CJK SC', 'DejaVu Sans Mono', monospace"
            fill="#000"
            stroke="#000"
            strokeWidth="3"
            strokeLinejoin="round"
          >
            COLOR ART
          </text>
          <rect x=".5" y=".5" width="321" height="71" fill="none" stroke="#5a6cd0" />
          {handles.map(([x, y]) => (
            <rect
              key={`${x}-${y}`}
              x={x - 2}
              y={y - 2}
              width="5"
              height="5"
              fill="#fff"
              stroke="#5a6cd0"
            />
          ))}
          <path d="M160.500 31v3M160.500 37v4M156 35.500h3M162 35.500h3" stroke="#fff" strokeWidth="3" />
          <path d="M160.500 31v9M156 35.500h9" stroke="#222" />
        </svg>
      </div>
    </div>
  );
}

export default function App() {
  return (
    <div className="relative flex h-screen flex-col overflow-hidden bg-[#535353] font-['Noto_Sans','Noto_Sans_CJK_SC',sans-serif]">
      <header className="flex h-[29px] shrink-0 items-center bg-[#535353] pl-[10px]">
        <div className="flex h-[15px] w-4 items-center justify-center rounded-sm bg-[#330000] text-[9px] leading-none font-bold text-[#ff9a00]">
          Ai
        </div>
        <button type="button" aria-label="主页" className="ml-[14px]">
          <Svg w={18} h={16}>
            <path d="m9 1 9 8h-2.500v7H11v-5H7v5H2.500V9H0z" fill="#d2d2d2" />
          </Svg>
        </button>
        <div className="ml-[14px] h-5 w-px bg-[#5e5e5e]" />
        <nav className="flex pl-[9px] text-xs text-[#f0f0f0]">
          {menuBar.map((label) => (
            <button
              key={label}
              type="button"
              className={clsx(
                "flex h-4 items-center px-2 whitespace-nowrap",
                label === "窗口(W)" && "bg-[#363636]",
              )}
            >
              {label}
            </button>
          ))}
        </nav>
      </header>
      <ControlBar />
      <div className="flex min-h-0 flex-1">
        <Toolbar />
        <main className="flex min-w-0 flex-1 flex-col">
          <div className="flex h-[30px] shrink-0 border-b border-[#3a3a3a] bg-[#424242]">
            <div className="flex w-[228px] items-center justify-between bg-[#535353] pr-[7px] pl-[9px] text-xs text-[#f0f0f0]">
              <span className="whitespace-nowrap">未标题-1* @ 31.06 % (RGB/预览)</span>
              <button type="button" aria-label="关闭">
                <Svg w={7} h={7}>
                  <path d="m1 1 5 5M6 1 1 6" stroke="#fff" strokeWidth="2" />
                </Svg>
              </button>
            </div>
          </div>
          <div className="flex min-h-0 flex-1">
            <Canvas />
            <div className="relative flex w-4 flex-col items-center bg-[#4b4b4b] pt-[6px]">
              <Svg w={8} h={5}>
                <path d="m.5 4.500 3.500-3.500 3.500 3.500" stroke="#aaa" strokeWidth="1.500" />
              </Svg>
              <div className="mt-[442px] h-[25px] w-[14px] rounded-full bg-[#626262]" />
            </div>
          </div>
        </main>
        <Dock />
      </div>

      <SymbolsPanel />
      <WindowMenu />

      <div className="absolute top-[242px] left-[1457px] h-14 w-[77px] border-2 border-[#e0202b]" />
      <div className="absolute top-[702px] left-[503px] h-[52px] w-[402px] border-2 border-[#d8232e]" />
      <div className="absolute bottom-[14px] left-0 flex h-[58px] w-[11px] items-center rounded-r-sm border border-[#20283a] bg-[#434f68]">
        <svg width="7" height="50" viewBox="0 0 7 50" className="block">
          <path d="M4 1v18" stroke="#27324a" strokeWidth="5" strokeDasharray="1 1" />
          <path d="M4 21v9" stroke="#d7dc6a" strokeWidth="5" strokeDasharray="1 1" />
          <path d="M4 31v18" stroke="#6fcf9a" strokeWidth="5" strokeDasharray="1 1" />
        </svg>
      </div>
      <p className="absolute bottom-3 left-[65px] font-['Noto_Sans_CJK_SC',sans-serif] text-[22px] leading-8 font-bold whitespace-nowrap text-[#ffea1f] [-webkit-text-stroke:4px_black] [paint-order:stroke_fill]">
        平面设计师才大官人
      </p>
    </div>
  );
}
